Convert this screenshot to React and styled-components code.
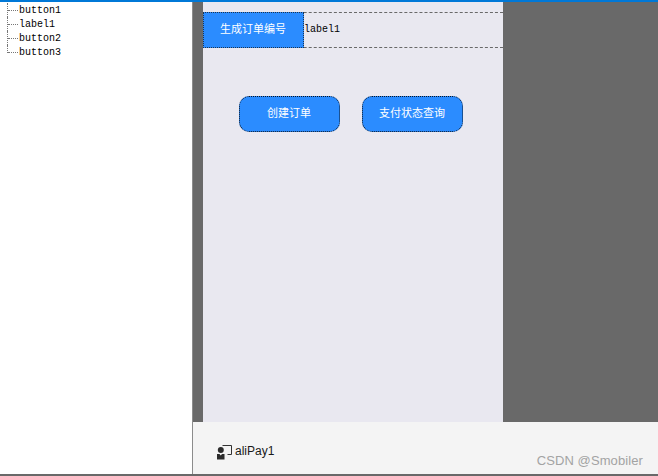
import React from "react";
import styled, { createGlobalStyle } from "styled-components";

const Global = createGlobalStyle`
  html, body { margin: 0; padding: 0; }
  body { width: 658px; height: 476px; overflow: hidden; background: #fff; }
`;

const Window = styled.div`
  width: 658px;
  height: 476px;
  box-sizing: border-box;
  display: flex;
  flex-direction: column;
  border-top: 2px solid #0078d7;
  border-bottom: 2px solid #696969;
  background: #fff;
`;

const Body = styled.div`
  flex: 1;
  display: flex;
  min-height: 0;
`;

const TreePane = styled.div`
  width: 193px;
  flex: none;
  box-sizing: border-box;
  padding-top: 1px;
  padding-left: 7px;
  background: #fff;
  border-right: 1px solid #8c8c8c;
`;

const TreeRow = styled.div`
  display: flex;
  height: 14px;
  font: 10px/16px "Liberation Mono", "DejaVu Sans Mono", monospace;
  font-weight: 500;
  color: #000;
`;

const Connector = styled.span`
  width: 10px;
  height: ${(p) => (p.$last ? "8px" : "14px")};
  margin-right: 1px;
  flex: none;
  border-left: 1px dotted #777;
  &::after {
    content: "";
    display: block;
    height: 7px;
    border-bottom: 1px dotted #777;
  }
`;

const Stage = styled.div`
  flex: 1;
  display: flex;
  flex-direction: column;
  min-width: 0;
`;

const Canvas = styled.div`
  height: 420px;
  flex: none;
  background: #696969;
  padding-left: 10px;
`;

const Phone = styled.div`
  width: 300px;
  height: 100%;
  background: #e9e8f0;
  padding-top: 10px;
  box-sizing: border-box;
`;

const OrderRow = styled.div`
  display: flex;
  height: 36px;
  box-sizing: border-box;
  border-top: 1px dashed #696969;
  border-bottom: 1px dashed #696969;
`;

const OrderButton = styled.div`
  width: 101px;
  flex: none;
  box-sizing: border-box;
  margin: -1px 0;
  padding: 0 1px 5px 0;
  display: flex;
  align-items: center;
  justify-content: center;
  background: #2b8cff;
  border: 1px dotted #1c3552;
  color: #fff;
  font: 11px "Noto Sans CJK SC", sans-serif;
`;

const OrderLabel = styled.div`
  padding-bottom: 2px;
  display: flex;
  align-items: center;
  font: 10px "Liberation Mono", "DejaVu Sans Mono", monospace;
  color: #000;
`;

const ActionRow = styled.div`
  display: flex;
  gap: 22px;
  margin-top: 48px;
  padding-left: 36px;
`;

const ActionButton = styled.div`
  width: 101px;
  height: 36px;
  box-sizing: border-box;
  padding: 0 1px 5px 0;
  display: flex;
  align-items: center;
  justify-content: center;
  background: #2b8cff;
  border: 1px dotted #0a1626;
  border-radius: 10px;
  color: #fff;
  font: 11px "Noto Sans CJK SC", sans-serif;
`;

const Tray = styled.div`
  flex: 1;
  position: relative;
  display: flex;
  align-items: flex-start;
  gap: 3px;
  padding: 22px 0 0 24px;
  background: #f4f4f4;
  font: 12px "Liberation Sans", Arial, sans-serif;
  color: #1a1a1a;
`;

const IconSlot = styled.svg`
  margin-top: 1px;
  flex: none;
`;

const Watermark = styled.span`
  position: absolute;
  right: 15px;
  bottom: 6px;
  font: 13px "Liberation Sans", Arial, sans-serif;
  letter-spacing: 0.1px;
  color: #a3a3a3;
`;

const ComponentIcon = () => (
  <IconSlot width="15" height="15" viewBox="0 0 15 15">
    <path d="M5.5 .5H14.5V9.5H10.5" fill="none" stroke="#333" strokeWidth="1" />
    <circle cx="3.8" cy="5" r="3" fill="#2b2b2b" />
    <path d="M0 9H2.5L3.8 10.5L5 9H7.5V14.5H0Z" fill="#2b2b2b" />
  </IconSlot>
);

const nodes = ["button1", "label1", "button2", "button3"];

export default function App() {
  return (
    <Window>
      <Global />
      <Body>
        <TreePane>
          {nodes.map((name, i) => (
            <TreeRow key={name}>
              <Connector $last={i === nodes.length - 1} />
              {name}
            </TreeRow>
          ))}
        </TreePane>
        <Stage>
          <Canvas>
            <Phone>
              <OrderRow>
                <OrderButton>生成订单编号</OrderButton>
                <OrderLabel>label1</OrderLabel>
              </OrderRow>
              <ActionRow>
                <ActionButton>创建订单</ActionButton>
                <ActionButton>支付状态查询</ActionButton>
              </ActionRow>
            </Phone>
          </Canvas>
          <Tray>
            <ComponentIcon />
            aliPay1
            <Watermark>CSDN @Smobiler</Watermark>
          </Tray>
        </Stage>
      </Body>
    </Window>
  );
}
